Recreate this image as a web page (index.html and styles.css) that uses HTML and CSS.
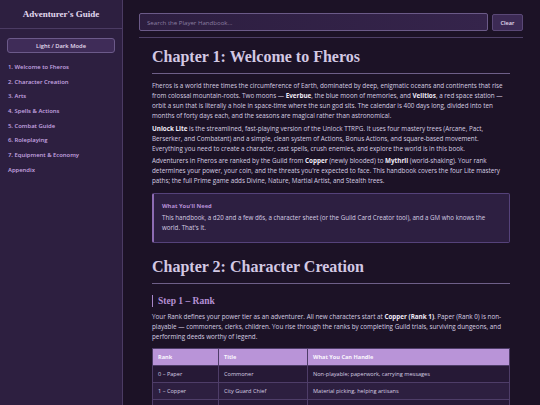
FILE: index.html
```html
<!DOCTYPE html>
<html lang="en">

<head>
    <meta charset="UTF-8">
    <meta name="viewport" content="width=device-width, initial-scale=1.0">
    <title>Adventurer's Guide</title>
    <link rel="stylesheet" href="styles.css">
</head>

<body>
    <div class="layout">
        <aside class="sidebar">
            <div class="brand">Adventurer's Guide</div>
            <div class="side-body">
                <button type="button" class="mode-btn">Light / Dark Mode</button>
                <nav class="toc">
                    <a href="#ch1">1. Welcome to Fheros</a>
                    <a href="#ch2">2. Character Creation</a>
                    <a href="#ch3">3. Arts</a>
                    <a href="#ch4">4. Spells &amp; Actions</a>
                    <a href="#ch5">5. Combat Guide</a>
                    <a href="#ch6">6. Roleplaying</a>
                    <a href="#ch7">7. Equipment &amp; Economy</a>
                    <a href="#appendix">Appendix</a>
                </nav>
            </div>
        </aside>

        <main class="main">
            <div class="searchbar">
                <input type="text" class="search" placeholder="Search the Player Handbook...">
                <button type="button" class="clear-btn">Clear</button>
            </div>

            <article class="handbook">
                <h1 id="ch1">Chapter 1: Welcome to Fheros</h1>
                <p>Fheros is a world three times the circumference of Earth, dominated by deep, enigmatic oceans and continents that rise from colossal mountain-roots. Two moons — <b>Everbue</b>, the blue moon of memories, and <b>Velitios</b>, a red space station — orbit a sun that is literally a hole in space-time where the sun god sits. The calendar is 400 days long, divided into ten months of forty days each, and the seasons are magical rather than astronomical.</p>
                <p><b>Unlock Lite</b> is the streamlined, fast-playing version of the Unlock TTRPG. It uses four mastery trees (Arcane, Pact, Berserker, and Combatant) and a simple, clean system of Actions, Bonus Actions, and square-based movement. Everything you need to create a character, cast spells, crush enemies, and explore the world is in this book.</p>
                <p>Adventurers in Fheros are ranked by the Guild from <b>Copper</b> (newly blooded) to <b>Mythril</b> (world-shaking). Your rank determines your power, your coin, and the threats you're expected to face. This handbook covers the four Lite mastery paths; the full Prime game adds Divine, Nature, Martial Artist, and Stealth trees.</p>

                <div class="callout">
                    <div class="callout-title">What You'll Need</div>
                    <p>This handbook, a d20 and a few d6s, a character sheet (or the Guild Card Creator tool), and a GM who knows the world. That's it.</p>
                </div>

                <h1 id="ch2">Chapter 2: Character Creation</h1>
                <h3>Step 1 – Rank</h3>
                <p>Your Rank defines your power tier as an adventurer. All new characters start at <b>Copper (Rank 1)</b>. Paper (Rank 0) is non-playable — commoners, clerks, children. You rise through the ranks by completing Guild trials, surviving dungeons, and performing deeds worthy of legend.</p>

                <table class="ranks">
                    <thead>
                        <tr>
                            <th class="col-rank">Rank</th>
                            <th class="col-title">Title</th>
                            <th>What You Can Handle</th>
                        </tr>
                    </thead>
                    <tbody>
                        <tr>
                            <td>0 – Paper</td>
                            <td>Commoner</td>
                            <td>Non-playable; paperwork, carrying messages</td>
                        </tr>
                        <tr>
                            <td>1 – Copper</td>
                            <td>City Guard Chief</td>
                            <td>Material picking, helping artisans</td>
                        </tr>
                        <tr>
                            <td>2 – Iron</td>
                            <td>Traveled Explorer</td>
                            <td>Fetching resources, escorts</td>
                        </tr>
                    </tbody>
                </table>
            </article>
        </main>
    </div>
</body>

</html>
```

FILE: styles.css
```css
body {
    margin: 0;
    padding: 0;
    background: #1c1226;
    color: #d6cde1;
    font-family: "Open Sans", "Noto Sans", sans-serif;
    height: 405px;
    overflow: hidden;
}

.layout {
    display: flex;
    height: 405px;
}

/* left navigation */
.sidebar {
    width: 122px;
    flex-shrink: 0;
    background: #2d1f40;
    border-right: 1px solid #4b3b63;
}

.brand {
    height: 28px;
    border-bottom: 1px solid #4b3b63;
    display: flex;
    align-items: center;
    justify-content: center;
    font-family: "Liberation Serif", serif;
    font-weight: bold;
    font-size: 9px;
    color: #e2d8ef;
}

.side-body {
    padding: 9px 7px;
}

.mode-btn {
    display: block;
    width: 100%;
    height: 15px;
    padding: 0;
    background: #3f2c58;
    border: 1px solid #6c5a8a;
    border-radius: 3px;
    color: #e4dcef;
    font-family: inherit;
    font-size: 5.8px;
    font-weight: 600;
}

.toc {
    display: flex;
    flex-direction: column;
    gap: 6.7px;
    padding: 10px 1px 0;
}

.toc a {
    color: #c7a6e2;
    text-decoration: none;
    font-size: 5.9px;
    font-weight: 600;
    line-height: 8px;
}

/* right side */
.main {
    flex: 1;
    padding: 13px 17px 0 16px;
}

.searchbar {
    display: flex;
    gap: 4px;
    padding-bottom: 6px;
    border-bottom: 1px solid #4e4066;
}

.search {
    flex: 1;
    height: 18px;
    box-sizing: border-box;
    margin: 0;
    padding: 0 7px;
    background: linear-gradient(90deg, #2d1e40, #35244b);
    border: 1px solid #6b5a88;
    border-radius: 2px;
    color: #d9d0e3;
    font-family: inherit;
    font-size: 6.1px;
}

.search::placeholder {
    color: #8b7ea0;
}

.clear-btn {
    width: 31px;
    height: 17px;
    margin-top: 1px;
    padding: 0;
    background: #3c2a54;
    border: 1px solid #5a4876;
    border-radius: 2px;
    color: #e4dcef;
    font-family: inherit;
    font-size: 5.6px;
    font-weight: 600;
}

.handbook {
    padding: 0 13px;
}

.handbook h1 {
    margin: 0;
    padding: 9px 0 6px;
    border-bottom: 1px solid #6e5f88;
    font-family: "Liberation Serif", serif;
    font-size: 16px;
    line-height: 20px;
    color: #d3c8e3;
}

.handbook p {
    margin: 2.5px 0;
    font-size: 6.3px;
    line-height: 10px;
}

.handbook h1 + p {
    margin-top: 7px;
}

.handbook b {
    color: #f0eaf6;
}

.callout {
    margin: 7px 0 5px;
    padding: 8px 10px 9px 8px;
    background: #2d1f41;
    border: 1px solid #55427a;
    border-left: 2px solid #8d6bb3;
    border-radius: 2px;
}

.callout-title {
    color: #b68fd6;
    font-weight: bold;
    font-size: 5.8px;
    line-height: 8px;
    margin-bottom: 3px;
}

.callout p {
    margin: 0;
    font-size: 6.2px;
}

.handbook h3 {
    margin: 11px 0 5px;
    padding-left: 5px;
    border-left: 1px solid #a887c8;
    font-family: "Liberation Serif", serif;
    font-size: 9.5px;
    line-height: 12px;
    color: #b48fd4;
}

.ranks {
    width: 100%;
    margin-top: 6px;
    border-collapse: collapse;
    font-size: 5.6px;
}

.ranks th,
.ranks td {
    height: 16px;
    padding: 0 5px;
    border: 1px solid #4e3d68;
    text-align: left;
}

.ranks th {
    background: #b994d8;
    color: #fbf7ff;
    font-weight: bold;
}

.ranks tbody tr {
    background: #261936;
}

.ranks tbody tr:nth-child(even) {
    background: #2d1f40;
}

.col-rank {
    width: 55px;
}

.col-title {
    width: 78px;
}
```
